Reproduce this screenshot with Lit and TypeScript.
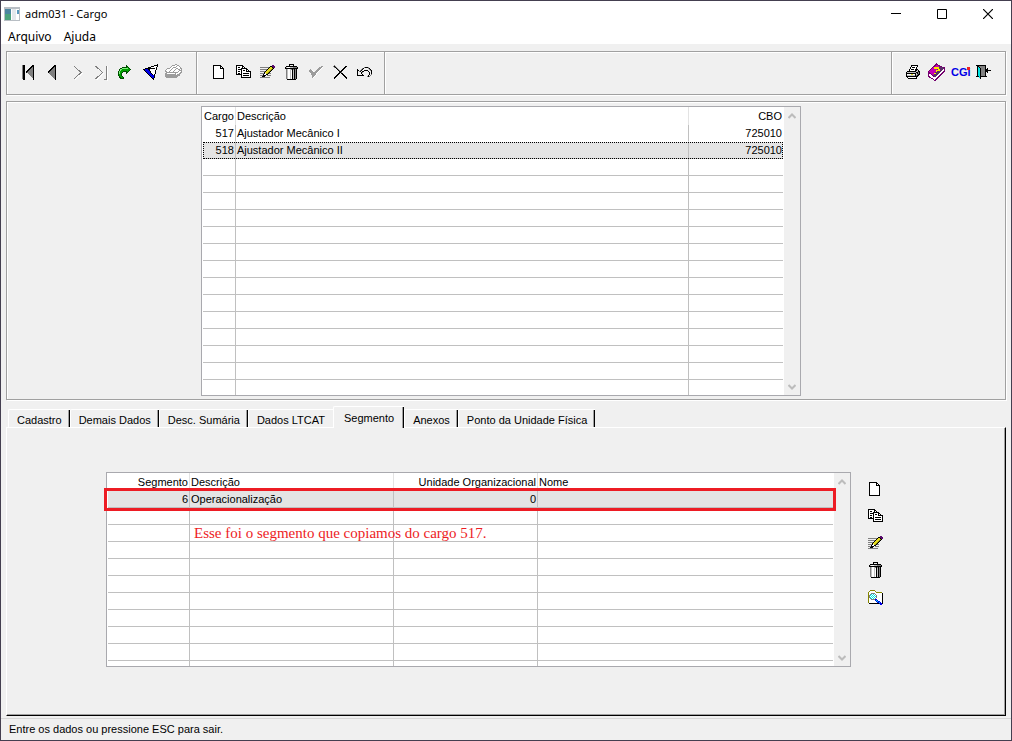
import { LitElement, html, svg, css, nothing } from "lit";
import { customElement, property, state } from "lit/decorators.js";
import { classMap } from "lit/directives/class-map.js";

const palette: Record<string, string> = {
  K: "#000000",
  W: "#ffffff",
  G: "#808080",
  L: "#c0c0c0",
  A: "#9c9c9c",
  Y: "#e6dc1e",
  O: "#868600",
  P: "#5a0a6e",
  C: "#00e5e5",
  B: "#0000e6",
  M: "#c800b4",
  D: "#74006e",
  E: "#00a000",
  F: "#004c00",
  H: "#80f080",
};

interface Bitmap {
  x: number;
  y: number;
  rows: string[];
}

const rep = (row: string, n: number) => Array<string>(n).fill(row);

const bitmaps: Record<string, Bitmap> = {
  ir: {
    x: 6, y: 5,
    rows: [
      "........F....",
      "........FF...",
      "....FFFFFEF..",
      "..FFHHHHHHEF.",
      ".FHHEEEEEEEEF",
      ".FHEEEEEEEEF.",
      "FHEEEFFFFEF..",
      "FHEEF...FF...",
      "FHEF....F....",
      "FEEF.........",
      "FEEF.........",
      ".FEEF........",
      ".FFEEF.......",
      "..FFFF.......",
    ],
  },
  anexar: {
    x: 5, y: 4,
    rows: [
      "..........AA.....",
      ".......AAAWWAA...",
      "......AWWWWAWWA..",
      ".....AWWAAAWWWWA.",
      "..AAAWWAWWWAAWWAA",
      ".AWWWWAWWWAWWAAWA",
      "AWWWWAWWWAWWWWAAA",
      "AAWWAWWWAWWWWAWWA",
      ".AAAAAAAAAAAAWWAA",
      "AAWWWWWWWWAWWWAA.",
      "AAAAAAAAAAAWAAA..",
      "AAAAAAAAAAAAAAA..",
      "AAAAAAAAAAAAA....",
      ".AAAAAAAAAAA.....",
    ],
  },
  novo: {
    x: 6, y: 5,
    rows: [
      "KKKKKKKK...",
      "KWWWWWWKK..",
      "KWWWWWWKWK.",
      "KWWWWWWKKKK",
      ...rep("KWWWWWWWWWK", 9),
      "KKKKKKKKKKK",
    ],
  },
  copiar: {
    x: 5, y: 5,
    rows: [
      "KKKKKKK........",
      "KWWWWWKK.......",
      "KWKKWWKWK......",
      "KWWWWKKKKKK....",
      "KWKKKKWWWWKK...",
      "KWWWWKWKKWKWK..",
      "KWKKWKWWWWKKKKK",
      "KWWWWKWWWWWWWWK",
      "KWKKWKWKKKKKKWK",
      "KKKKKKWWWWWWWWK",
      ".....KWKKKKKKWK",
      ".....KWWWWWWWWK",
      ".....KKKKKKKKKK",
    ],
  },
  editar: {
    x: 5, y: 5,
    rows: [
      "............PP.",
      "..........KKPPP",
      "GGGGGGGGGKYYKPP",
      "........KYYYOK.",
      "GGGGGGGKYYYOK..",
      "......KYYYOK...",
      "GGGGGKYYYOK....",
      "....KYYYOK.....",
      "GGGGKWYOKGG....",
      "...KWWKK.......",
      "GGGKKK.GGGG....",
      "..KKK..........",
      "GGGGGGGGGG.....",
    ],
  },
  excluir: {
    x: 6, y: 4,
    rows: [
      "....KKKKK....",
      "....K...K....",
      ".KKKKKKKKKKK.",
      "KLWWWLLLGGGGK",
      "KKKKKKKKKKKKK",
      ".GLWWLGKGKGK.",
      ...rep(".GLWWLWKLKGK.", 9),
      "..KKKKKKKKK..",
    ],
  },
  confirmar: {
    x: 6, y: 6,
    rows: [
      "............AA",
      "..........AAAW",
      ".........AAAW.",
      ".A......AAAW..",
      "AAAW...AAAW...",
      "AAAAW.AAAW....",
      ".AAAAAAAW.....",
      ".WAAAAAW......",
      "..AAAAAW......",
      "...AAAW.......",
      "...AAW........",
      "...AW.........",
    ],
  },
  desfazer: {
    x: 6, y: 7,
    rows: [
      ".......GKKKG....",
      ".....GK....GK...",
      "K...GK......GK..",
      "KK.GK..KKKK..GK.",
      "K.GK.KK....K..K.",
      "K...KG......K.K.",
      "K...K.......K.K.",
      "K....K......K.G.",
      "KKKKKKK....K.G..",
      "..........GKG...",
    ],
  },
  imprimir: {
    x: 5, y: 5,
    rows: [
      ".....KKKKKKK..",
      ".....KWWWWWK..",
      "....KWKKKWK...",
      "....KWWWWWK...",
      "...KWKKKWKKK..",
      "...KWWWWWKKLK.",
      ".KKKKKKKKKLLKK",
      "KLLLLLLLLLKKGK",
      "KKKKKKKKKKLKGK",
      "KWWWWYYWWKLGKK",
      "KLLLLLLLLKGKK.",
      "KKKKKKKKKKKK..",
      ".KWWWWWWWWK...",
      "..KKKKKKKKK...",
    ],
  },
  sair: {
    x: 3, y: 5,
    rows: [
      "KKKKKKKKKK.....",
      ".KKGGGGGGK.....",
      ".KCKGGGGGK.....",
      ".KCCKGGGGK.K...",
      ".KCCKGGGGKKK...",
      ".KCCKGGGGKKKKKK",
      ".KCCKGGGGKKK...",
      ".KCCKGGGGK.K...",
      ".KCCKGGGGK.....",
      ".KCCKGGGGK.....",
      ".KCCKGGGGK.....",
      "KKKCKKKKKKK....",
      "...CK..........",
      "....K..........",
    ],
  },
  consultar: {
    x: 5, y: 5,
    rows: [
      "..OOOOO........",
      ".OWWWWWO.......",
      "OWWWWWWWOOOOOO.",
      "OWWGGGGWWWWWWWK",
      "OWGCWCWGWWWWWWK",
      "OGCWCWCWGWWWWWK",
      "OGWCWCWCGWWWWWK",
      "OGCWCWCWGWWWWWK",
      "OWGCWCWGWWWWWWK",
      "OWWGGGGBBWWWWWK",
      "OWWWWWWBCBWWWWK",
      "OWWWWWWWBCBBWWK",
      "OWWWWWWWWBBCBWK",
      ".KKKKKKKKKKBBBK",
      "............BB.",
    ],
  },
};

const drawings: Record<string, unknown> = {
  primeiro: svg`<rect x="6" y="5" width="1" height="14" fill="#808080"/><rect x="7" y="5" width="2" height="15" fill="#000"/>
    <path d="M18 5v15l-7.500-7.500z" fill="#808080"/><path d="M17.500 5v15M17 5.500l-7 7" fill="none" stroke="#000"/>`,
  anterior: svg`<path d="M16 5v15l-8-7.500z" fill="#808080"/><path d="M15.500 5v15M15 5.500l-7 7" fill="none" stroke="#000"/>`,
  proximo: svg`<path d="M11 7l7 6.500-7 6.500" fill="none" stroke="#fff"/><path d="M10 6l7 6.500-7 6.500" fill="none" stroke="#808080"/>`,
  ultimo: svg`<path d="M8.500 7l7 6.500-7 6.500M19.500 6v15" fill="none" stroke="#fff"/><path d="M7.500 6l7 6.500-7 6.500" fill="none" stroke="#808080"/><path d="M18.500 6v14M16 19.500h3" fill="none" stroke="#808080"/>`,
  filtrar: svg`<path d="M7 9l15-4-4 15z" fill="#fff"/><path d="M7 9l5-1 6 8v4z" fill="#0000e6"/>
    <path d="M7.500 9.500l14-4.500-4 14.500z" fill="none" stroke="#000"/><path d="M12 8l4.500 7M13 8h6" fill="none" stroke="#000"/>`,
  cancelar: svg`<path d="M7 6l13 12.500" fill="none" stroke="#808080" stroke-width="1.500"/><path d="M7 6l13 12.500M19.500 6L8 17.500l-1 1.500" fill="none" stroke="#000"/>`,
  ajuda: svg`<path d="M3 12v4l7 4.500 9-9V8l-9 9z" fill="#fff" stroke="#74006e"/>
    <path d="M3 12l8.500-8 7.500 4-9 9z" fill="#c800b4" stroke="#74006e"/>
    <path d="M14 6l5 2-9 9-2-1z" fill="#5a3068"/>
    <path d="M9 8h4l1 2-3 1M8.500 13.500h2" fill="none" stroke="#ffe600" stroke-width="1.500"/>`,
};

@customElement("pixel-icon")
export class PixelIcon extends LitElement {
  @property() name = "";

  static styles = css`
    :host { display: block; width: 24px; height: 24px; }
    .canvas { display: block; width: 24px; height: 24px; }
  `;

  private runs(map: Bitmap) {
    const out: unknown[] = [];
    map.rows.forEach((row, y) => {
      let x = 0;
      while (x < row.length) {
        let end = x + 1;
        while (end < row.length && row[end] === row[x]) end++;
        if (row[x] !== ".") {
          out.push(svg`<rect x=${map.x + x} y=${map.y + y} width=${end - x} height="1" fill=${palette[row[x]]}></rect>`);
        }
        x = end;
      }
    });
    return out;
  }

  render() {
    const map = bitmaps[this.name];
    return html`<svg class="canvas" viewBox="0 0 24 24" shape-rendering="crispEdges" aria-hidden="true">
      ${map ? this.runs(map) : drawings[this.name] ?? nothing}
    </svg>`;
  }
}

@customElement("tool-button")
export class ToolButton extends LitElement {
  @property() icon = "";
  @property() label = "";

  static styles = css`
    :host { display: block; }
    .btn { display: block; padding: 0; border: 0; background: none; width: 24px; height: 24px; }
    .btn:focus-visible { outline: 1px dotted #000; }
    .logo {
      position: relative; display: block; padding-left: 2px; color: #0000e6;
      font: bold 11px/24px "Liberation Sans", Arial, sans-serif; text-align: left;
    }
    .dot { position: absolute; left: 18px; top: 7px; width: 3px; height: 3px; background: #f02020; }
  `;

  render() {
    return html`<button class="btn" type="button" aria-label=${this.label} title=${this.label}>
      ${this.icon === "cgi"
        ? html`<span class="logo">CGi<span class="dot"></span></span>`
        : html`<pixel-icon name=${this.icon}></pixel-icon>`}
    </button>`;
  }
}

interface Column {
  title: string;
  width: string;
  right?: boolean;
}

@customElement("data-grid")
export class DataGrid extends LitElement {
  @property({ attribute: false }) columns: Column[] = [];
  @property({ attribute: false }) rows: string[][] = [];
  @property({ type: Number }) blanks = 0;
  @property({ type: Number }) selected = 0;
  @property({ type: Boolean }) focused = false;
  @property() label = "";

  static styles = css`
    :host { display: flex; border: 1px solid #a9a9ae; background: #fff; }
    .grid { flex: 1; min-width: 0; margin: 0 1px; table-layout: fixed; border-collapse: separate; border-spacing: 0; font-size: 11px; line-height: 16px; }
    th, td { box-sizing: border-box; padding: 0 1px; font-weight: normal; text-align: left; white-space: nowrap; border-right: 1px solid #c0c0c0; overflow: hidden; }
    th { height: 18px; border-right-color: #e3e3e3; }
    td { height: 17px; border-bottom: 1px solid #c0c0c0; }
    th:last-child, td:last-child { border-right: 0; }
    .right { text-align: right; }
    .plain td { border-bottom-color: #fff; }
    .chosen td { background: #e4e4e4; }
    .focus { outline: 1px dotted #000; outline-offset: -1px; }
    .rest td { border-bottom: 0; height: var(--rest, 15px); }
    .scroll { width: 16px; display: flex; flex-direction: column; justify-content: space-between; background: #f0f0f0; }
    .arrow { padding: 0; border: 0; background: none; height: 17px; display: grid; place-items: center; }
    .glyph { display: block; width: 8px; height: 6px; }
  `;

  render() {
    const side = (c?: Column) => classMap({ right: !!c?.right });
    return html`
      <table class="grid" aria-label=${this.label}>
        <colgroup>${this.columns.map((c) => html`<col style="width:${c.width}">`)}</colgroup>
        <thead><tr>${this.columns.map((c) => html`<th class=${side(c)}>${c.title}</th>`)}</tr></thead>
        <tbody>
          ${this.rows.map((r, i) => html`<tr class=${classMap({
            plain: i !== this.selected,
            chosen: i === this.selected,
            focus: this.focused && i === this.selected,
          })} @click=${() => (this.selected = i)}>
            ${r.map((v, j) => html`<td class=${side(this.columns[j])}>${v}</td>`)}</tr>`)}
          ${Array.from({ length: this.blanks }, () => html`<tr>${this.columns.map(() => html`<td></td>`)}</tr>`)}
          <tr class="rest">${this.columns.map(() => html`<td></td>`)}</tr>
        </tbody>
      </table>
      <div class="scroll">
        <button class="arrow" type="button" aria-label="Rolar para cima">
          <svg class="glyph" viewBox="0 0 8 6"><path d="M.5 5L4 1.500 7.500 5" fill="none" stroke="#bcbcbc" stroke-width="2"/></svg>
        </button>
        <button class="arrow" type="button" aria-label="Rolar para baixo">
          <svg class="glyph" viewBox="0 0 8 6"><path d="M.5 1L4 4.500 7.500 1" fill="none" stroke="#bcbcbc" stroke-width="2"/></svg>
        </button>
      </div>`;
  }
}

const navigation = [
  ["primeiro", "Primeiro"], ["anterior", "Anterior"], ["proximo", "Próximo"], ["ultimo", "Último"],
  ["ir", "Ir para"], ["filtrar", "Filtrar"], ["anexar", "Anexar"],
];
const editing = [
  ["novo", "Novo"], ["copiar", "Copiar"], ["editar", "Editar"], ["excluir", "Excluir"],
  ["confirmar", "Confirmar"], ["cancelar", "Cancelar"], ["desfazer", "Desfazer"],
];
const utilities = [["imprimir", "Imprimir"], ["ajuda", "Ajuda"], ["cgi", "CGI"], ["sair", "Sair"]];
const segmentTools = [
  ["novo", "Novo segmento"], ["copiar", "Copiar segmento"], ["editar", "Editar segmento"],
  ["excluir", "Excluir segmento"], ["consultar", "Consultar segmento"],
];
const tabs = ["Cadastro", "Demais Dados", "Desc. Sumária", "Dados LTCAT", "Segmento", "Anexos", "Ponto da Unidade Física"];

const cargoColumns: Column[] = [
  { title: "Cargo", width: "32px", right: true },
  { title: "Descrição", width: "auto" },
  { title: "CBO", width: "94px", right: true },
];
const cargoRows = [
  ["517", "Ajustador Mecânico I", "725010"],
  ["518", "Ajustador Mecânico II", "725010"],
];
const segmentColumns: Column[] = [
  { title: "Segmento", width: "82px", right: true },
  { title: "Descrição", width: "204px" },
  { title: "Unidade Organizacional", width: "144px", right: true },
  { title: "Nome", width: "auto" },
];
const segmentRows = [["6", "Operacionalização", "0", ""]];

@customElement("app-root")
export class AppRoot extends LitElement {
  @state() private tab = "Segmento";

  static styles = css`
    :host { display: block; font-family: "Liberation Sans", Arial, sans-serif; font-size: 11px; color: #000; }
    .window { box-sizing: border-box; min-height: 100vh; display: flex; flex-direction: column; border: 1px solid #443f50; background: #f0f0f0; }
    .titlebar { display: flex; align-items: center; height: 25px; background: #fff; padding-left: 3px; font: 11px/16px "Noto Sans", "Open Sans", sans-serif; }
    .appicon { width: 16px; height: 14px; margin-right: 5px; }
    .title { flex: 1; font: inherit; margin: 0; }
    .control { width: 46px; height: 25px; padding: 0; border: 0; background: none; display: grid; place-items: center; }
    .menubar { display: flex; gap: 12px; height: 18px; padding-left: 7px; background: #fff; }
    .menu { padding: 2px 0 0; border: 0; background: none; color: inherit; font: 12px/18px "Noto Sans", "Open Sans", sans-serif; }
    .main { flex: 1; display: flex; flex-direction: column; padding: 7px 5px 2px; }
    .toolbar { display: flex; border: 1px solid #a0a0a0; box-shadow: 1px 1px 0 #fff, inset 1px 1px 0 #fff; }
    .group { display: flex; padding: 8px 12px 10px 9px; border-right: 1px solid #a0a0a0; box-shadow: 1px 0 0 #fff; }
    .group.edit { padding: 8px 9px 10px 10px; }
    .group.spacer { flex: 1; padding: 0; }
    .group.last { padding: 8px 8px 10px 9px; border-right: 0; box-shadow: none; }
    .panel { display: grid; grid-template-columns: 194fr 600fr 204fr; margin-top: 6px; padding: 4px 0 3px; border: 1px solid #a0a0a0; box-shadow: 1px 1px 0 #fff, inset 1px 1px 0 #fff; }
    .cargos { grid-column: 2; --rest: 15px; }
    .tabs { display: flex; align-items: flex-end; margin-top: 6px; padding-left: 2px; }
    .tab {
      height: 18px; padding: 2px 8px 0; border: 0; border-top: 1px solid #fff; border-left: 1px solid #fff;
      border-radius: 2px 0 0 0; background: none; color: inherit; font: 11px/16px "Liberation Sans", Arial, sans-serif;
      white-space: nowrap; box-shadow: inset -1px 0 0 #000, inset -2px 0 0 #a0a0a0;
    }
    .tab.before { box-shadow: none; }
    .tab.active { height: 22px; margin-bottom: -1px; padding: 0 10px; background: #f0f0f0; position: relative; z-index: 1; }
    .pane {
      flex: 1; display: flex; align-items: flex-start; padding: 44px 118px 44px 99px;
      border-top: 1px solid #fff; border-left: 1px solid #fff; border-right: 1px solid #000; border-bottom: 1px solid #000;
      box-shadow: inset -1px -1px 0 #a0a0a0;
    }
    .segments { position: relative; flex: 1; --rest: 5px; }
    .mark { position: absolute; left: -2px; right: 15px; top: 16px; height: 17px; border: 3px solid #ed1c24; }
    .note { position: absolute; left: 88px; top: 52px; margin: 0; color: #ed1c24; font: 15px/18px "Liberation Serif", "Times New Roman", serif; white-space: nowrap; }
    .tools { display: flex; flex-direction: column; gap: 3px; margin: 5px 0 0 12px; }
    .status { height: 21px; padding-left: 8px; border-top: 1px solid #d7d7d7; line-height: 20px; }
  `;

  private buttons(list: string[][]) {
    return list.map(([icon, label]) => html`<tool-button icon=${icon} label=${label}></tool-button>`);
  }

  render() {
    const current = tabs.indexOf(this.tab);
    return html`<div class="window">
      <header class="titlebar">
        <svg class="appicon" viewBox="0 0 16 14" shape-rendering="crispEdges" aria-hidden="true">
          <rect width="16" height="14" fill="#b8bec4"/><rect x="1" y="2" width="14" height="11" fill="#fff"/>
          <rect x="1" y="2" width="6" height="11" fill="#4c86a0"/><rect x="1" y="7" width="6" height="6" fill="#4ba27c"/>
          <rect x="8" y="2" width="4" height="11" fill="#e4e8ec"/><rect x="13" y="3" width="2" height="4" fill="#5a9ac0"/>
        </svg>
        <h1 class="title">adm031 - Cargo</h1>
        <button class="control" type="button" aria-label="Minimizar"><svg width="10" height="10"><path d="M0 4.500h10" stroke="#000"/></svg></button>
        <button class="control" type="button" aria-label="Maximizar"><svg width="10" height="10"><path d="M.5.5h9v9h-9z" fill="none" stroke="#000"/></svg></button>
        <button class="control" type="button" aria-label="Fechar"><svg width="10" height="10"><path d="M0 0l10 10M10 0L0 10" stroke="#000" stroke-width="1.200"/></svg></button>
      </header>
      <nav class="menubar">
        <button class="menu" type="button">Arquivo</button>
        <button class="menu" type="button">Ajuda</button>
      </nav>
      <main class="main">
        <div class="toolbar" role="toolbar">
          <div class="group">${this.buttons(navigation)}</div>
          <div class="group edit">${this.buttons(editing)}</div>
          <div class="group spacer"></div>
          <div class="group last">${this.buttons(utilities)}</div>
        </div>
        <section class="panel">
          <data-grid class="cargos" label="Cargos" .columns=${cargoColumns} .rows=${cargoRows} .selected=${1} .blanks=${13} focused></data-grid>
        </section>
        <div class="tabs" role="tablist">
          ${tabs.map((t, i) => html`<button type="button" role="tab" aria-selected=${i === current}
            class=${classMap({ tab: true, active: i === current, before: i === current - 1 })}
            @click=${() => (this.tab = t)}>${t}</button>`)}
        </div>
        <section class="pane" role="tabpanel">
          <div class="segments">
            <data-grid label="Segmentos" .columns=${segmentColumns} .rows=${segmentRows} .blanks=${9}></data-grid>
            <div class="mark"></div>
            <p class="note">Esse foi o segmento que copiamos do cargo 517.</p>
          </div>
          <div class="tools">${this.buttons(segmentTools)}</div>
        </section>
      </main>
      <footer class="status">Entre os dados ou pressione ESC para sair.</footer>
    </div>`;
  }
}
